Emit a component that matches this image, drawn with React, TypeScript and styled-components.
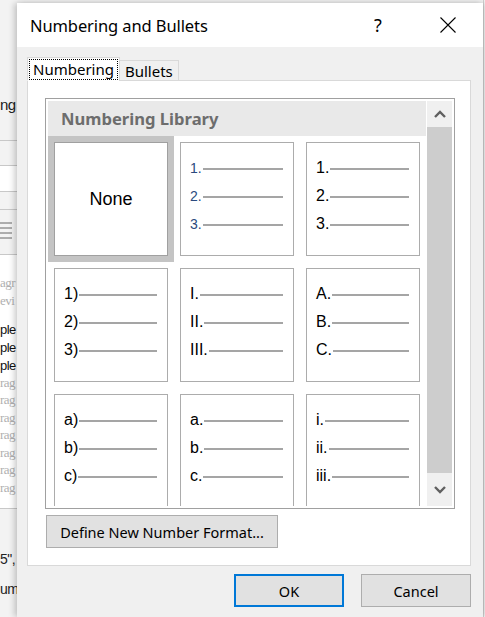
import React from "react";
import styled, { createGlobalStyle } from "styled-components";

const Global = createGlobalStyle`
  html, body { margin: 0; padding: 0; }
  body { width: 485px; height: 617px; overflow: hidden; background: #f3f3f3; font-family: "Noto Sans", "Liberation Sans", sans-serif; }
`;

const Page = styled.div`
  display: flex;
  width: 485px;
  height: 617px;
  overflow: hidden;
`;

/* ---------- background document strip ---------- */
const DocStrip = styled.div`
  width: 17px;
  flex: none;
  display: flex;
  flex-direction: column;
  background: #f3f3f3;
`;

const DocBand = styled.div<{ $h: number; $bg?: string; $line?: boolean }>`
  height: ${(p) => p.$h}px;
  flex: none;
  background: ${(p) => p.$bg || "#f3f3f3"};
  border-bottom: ${(p) => (p.$line ? "1px solid #c8c8c8" : "none")};
  display: flex;
  flex-direction: column;
  overflow: hidden;
`;

const DocText = styled.div<{ $size?: number; $color?: string; $serif?: boolean; $h?: number }>`
  height: ${(p) => p.$h || 18}px;
  display: flex;
  justify-content: flex-start;
  align-items: center;
  white-space: nowrap;
  font-family: ${(p) => (p.$serif ? '"Liberation Serif", serif' : '"Liberation Sans", sans-serif')};
  font-size: ${(p) => p.$size || 14}px;
  letter-spacing: -0.5px;
  color: ${(p) => p.$color || "#222"};
`;

const Spacer = styled.div<{ $h: number }>`
  height: ${(p) => p.$h}px;
  flex: none;
`;

const RightStrip = styled.div`
  width: 2px;
  flex: none;
  background: #f3f3f3;
  border-left: 1px solid #d0d0d0;
`;

/* ---------- dialog ---------- */
const Dialog = styled.div`
  width: 466px;
  flex: none;
  margin-top: 3px;
  background: #f0f0f0;
  box-shadow: -3px 0 6px rgba(0, 0, 0, 0.18), 3px 0 6px rgba(0, 0, 0, 0.12);
  display: flex;
  flex-direction: column;
  position: relative;
`;

const TitleBar = styled.div`
  height: 44px;
  background: #ffffff;
  display: flex;
  align-items: center;
  padding-left: 13px;
  padding-right: 12px;
  gap: 24px;
`;

const Title = styled.div`
  flex: 1;
  font-size: 16.5px;
  color: #000;
  letter-spacing: -0.1px;
`;

const TitleButton = styled.div`
  width: 46px;
  height: 44px;
  display: flex;
  align-items: center;
  justify-content: center;
  font-size: 18px;
  color: #000;
`;

const Body = styled.div`
  padding: 11px 12px 0 10px;
  display: flex;
  flex-direction: column;
`;

const TabRow = styled.div`
  display: flex;
  align-items: flex-end;
  height: 23px;
  position: relative;
  z-index: 1;
  margin-bottom: -1px;
`;

const Tab = styled.div<{ $active?: boolean }>`
  height: ${(p) => (p.$active ? 24 : 21)}px;
  padding: 0 ${(p) => (p.$active ? 2 : 5)}px;
  box-sizing: border-box;
  background: ${(p) => (p.$active ? "#ffffff" : "#f0f0f0")};
  border: 1px solid #d9d9d9;
  border-bottom: ${(p) => (p.$active ? "1px solid #ffffff" : "1px solid #d9d9d9")};
  margin-left: ${(p) => (p.$active ? 0 : -1)}px;
  display: flex;
  align-items: center;
  font-size: 15px;
  color: #000;
`;

const FocusLabel = styled.span`
  outline: 1px dotted #000;
  outline-offset: 0px;
  padding: 0 3px;
  line-height: 19px;
`;

const TabPanel = styled.div`
  width: 444px;
  height: 486px;
  box-sizing: border-box;
  background: #ffffff;
  border: 1px solid #d9d9d9;
  padding: 17px 0 0 17px;
  display: flex;
  flex-direction: column;
`;

const Gallery = styled.div`
  width: 410px;
  height: 411px;
  box-sizing: border-box;
  border: 1px solid #a0a0a0;
  padding: 2px;
  display: flex;
  gap: 1px;
`;

const GalleryMain = styled.div`
  width: 378px;
  flex: none;
  overflow: hidden;
  display: flex;
  flex-direction: column;
`;

const GalleryHeader = styled.div`
  height: 35px;
  flex: none;
  background: #e9e9e9;
  display: flex;
  align-items: center;
  padding-left: 13px;
  font-weight: 700;
  font-size: 16.6px;
  color: #6d6d6d;
`;

const Grid = styled.div`
  display: grid;
  grid-template-columns: repeat(3, 114px);
  grid-auto-rows: 114px;
  gap: 12px;
  padding: 6px;
`;

const Tile = styled.div<{ $selected?: boolean }>`
  box-sizing: border-box;
  border: 1px solid ${(p) => (p.$selected ? "#a0a0a0" : "#acacac")};
  background: #fff;
  outline: ${(p) => (p.$selected ? "6px solid #c4c4c4" : "none")};
  display: flex;
  flex-direction: column;
  padding: 11px 10px 0 9px;
`;

const NoneTile = styled(Tile)`
  align-items: center;
  justify-content: center;
  padding: 0;
  font-family: "Liberation Sans", Arial, sans-serif;
  font-size: 18px;
  color: #000;
`;

const ListRow = styled.div<{ $small?: boolean }>`
  height: 28px;
  display: flex;
  align-items: center;
  font-family: "Liberation Sans", Arial, sans-serif;
  font-size: ${(p) => (p.$small ? 14 : 16)}px;
  color: ${(p) => (p.$small ? "#2b4a7e" : "#000")};
`;

const Rule = styled.div`
  flex: 1;
  height: 2px;
  background: #a5a5a5;
  margin-left: 1px;
  margin-top: 2px;
`;

const Scrollbar = styled.div`
  width: 25px;
  flex: none;
  background: #f0f0f0;
  display: flex;
  flex-direction: column;
`;

const ScrollArrow = styled.div<{ $h: number }>`
  height: ${(p) => p.$h}px;
  flex: none;
  display: flex;
  align-items: center;
  justify-content: center;
`;

const Thumb = styled.div`
  flex: 1;
  background: #cdcdcd;
`;

const Button = styled.div<{ $primary?: boolean; $w: number }>`
  width: ${(p) => p.$w}px;
  height: 33px;
  box-sizing: border-box;
  background: #e1e1e1;
  border: ${(p) => (p.$primary ? "2px solid #0078d7" : "1px solid #adadad")};
  display: flex;
  align-items: center;
  justify-content: center;
  font-size: 14.5px;
  color: #000;
`;

const DefineRow = styled.div`
  margin-top: 6px;
  margin-left: 1px;
`;

const Footer = styled.div`
  display: flex;
  justify-content: flex-end;
  gap: 17px;
  padding-top: 8px;
`;

type Item = { labels: string[]; small?: boolean };

const items: Item[] = [
  { labels: ["1.", "2.", "3."], small: true },
  { labels: ["1.", "2.", "3."] },
  { labels: ["1)", "2)", "3)"] },
  { labels: ["I.", "II.", "III."] },
  { labels: ["A.", "B.", "C."] },
  { labels: ["a)", "b)", "c)"] },
  { labels: ["a.", "b.", "c."] },
  { labels: ["i.", "ii.", "iii."] },
];

const Chevron = ({ up }: { up?: boolean }) => (
  <svg width="12" height="8" viewBox="0 0 12 8">
    <path
      d={up ? "M1 7 L6 2 L11 7" : "M1 1 L6 6 L11 1"}
      fill="none"
      stroke="#606060"
      strokeWidth="2.4"
    />
  </svg>
);

const CloseIcon = () => (
  <svg width="16" height="16" viewBox="0 0 16 16">
    <path d="M0.5 0.5 L15.5 15.5 M15.5 0.5 L0.5 15.5" stroke="#000" strokeWidth="1.1" />
  </svg>
);

const LeftDocument = () => (
  <DocStrip>
    <Spacer $h={94} />
    <DocText $h={20} $size={15}>ng</DocText>
    <DocBand $h={26} $line />
    <DocBand $h={24} $line />
    <DocBand $h={25} $bg="#ffffff" $line />
    <DocBand $h={17} $line />
    <DocBand $h={44} $line>
      <Spacer $h={11} />
      <svg width="12" height="22" viewBox="0 0 12 22">
        <path d="M0 2h12M0 7h12M0 12h12M0 17h12" stroke="#666" strokeWidth="1" />
      </svg>
    </DocBand>
    <DocBand $h={253} $bg="#ffffff" $line>
      <Spacer $h={19} />
      <DocText $serif $color="#b0b0b0" $h={18} $size={13}>agr</DocText>
      <DocText $serif $color="#b0b0b0" $h={18} $size={13}>evi</DocText>
      <Spacer $h={10} />
      <DocText $color="#111" $h={18} $size={13}>ple</DocText>
      <DocText $color="#111" $h={18} $size={13}>ple</DocText>
      <DocText $color="#111" $h={18} $size={13}>ple</DocText>
      <DocText $serif $color="#b0b0b0" $h={17.5} $size={13}>rag</DocText>
      <DocText $serif $color="#b0b0b0" $h={17.5} $size={13}>rag</DocText>
      <DocText $serif $color="#b0b0b0" $h={17.5} $size={13}>rag</DocText>
      <DocText $serif $color="#b0b0b0" $h={17.5} $size={13}>rag</DocText>
      <DocText $serif $color="#b0b0b0" $h={17.5} $size={13}>rag</DocText>
      <DocText $serif $color="#b0b0b0" $h={17.5} $size={13}>rag</DocText>
      <DocText $serif $color="#b0b0b0" $h={17.5} $size={13}>rag</DocText>
    </DocBand>
    <Spacer $h={40} />
    <DocText $h={20} $size={14}>5",</DocText>
    <Spacer $h={10} />
    <DocText $h={20} $size={14}>um</DocText>
  </DocStrip>
);

export default function App() {
  return (
    <>
      <Global />
      <Page>
        <LeftDocument />
        <Dialog>
          <TitleBar>
            <Title>Numbering and Bullets</Title>
            <TitleButton>?</TitleButton>
            <TitleButton>
              <CloseIcon />
            </TitleButton>
          </TitleBar>
          <Body>
            <TabRow>
              <Tab $active>
                <FocusLabel>Numbering</FocusLabel>
              </Tab>
              <Tab>Bullets</Tab>
            </TabRow>
            <TabPanel>
              <Gallery>
                <GalleryMain>
                  <GalleryHeader>Numbering Library</GalleryHeader>
                  <Grid>
                    <NoneTile $selected>None</NoneTile>
                    {items.map((it, i) => (
                      <Tile key={i}>
                        {it.labels.map((l) => (
                          <ListRow key={l} $small={it.small}>
                            <span>{l}</span>
                            <Rule />
                          </ListRow>
                        ))}
                      </Tile>
                    ))}
                  </Grid>
                </GalleryMain>
                <Scrollbar>
                  <ScrollArrow $h={26}>
                    <Chevron up />
                  </ScrollArrow>
                  <Thumb />
                  <ScrollArrow $h={33}>
                    <Chevron />
                  </ScrollArrow>
                </Scrollbar>
              </Gallery>
              <DefineRow>
                <Button $w={232}>Define New Number Format...</Button>
              </DefineRow>
            </TabPanel>
            <Footer>
              <Button $primary $w={110}>OK</Button>
              <Button $w={110}>Cancel</Button>
            </Footer>
          </Body>
        </Dialog>
        <RightStrip />
      </Page>
    </>
  );
}
